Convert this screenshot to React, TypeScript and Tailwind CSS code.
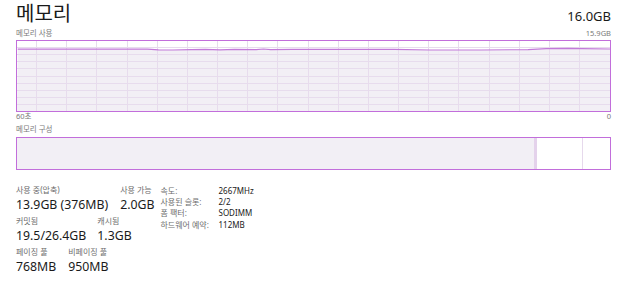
import React from "react";

const font = { fontFamily: '"Segoe UI", "Noto Sans", "Noto Sans CJK KR", sans-serif' };

function UsageGraph() {
  const W = 595;
  const H = 72;
  const vx = Array.from({ length: 19 }, (_, i) => 20.5 + Math.round(i * 30.17));
  const hy = Array.from({ length: 9 }, (_, i) => Math.round((i + 1) * 7.1) + 0.5);
  const pts: [number, number][] = [
    [1, 9.2], [180, 9.2], [195, 9.8], [215, 10], [240, 9.6], [260, 9.4], [280, 9.8], [300, 9.4],
    [330, 9.6], [340, 9], [350, 9.6], [380, 9.4], [420, 9.4], [520, 9.4], [570, 10], [600, 10],
    [640, 10], [705, 9.6], [730, 8.6], [760, 8.4], [780, 8.6], [818, 9],
  ];
  const line = pts
    .map(([x, y]) => [1 + (x / 818) * (W - 2), y] as [number, number])
    .map(([x, y]) => `${x.toFixed(1)},${y.toFixed(1)}`);
  const area = `M1,${H - 1} L${line.join(" L")} L${W - 1},${H - 1} Z`;
  return (
    <svg width={W} height={H} viewBox={`0 0 ${W} ${H}`} className="block">
      <rect x="0" y="0" width={W} height={H} fill="#ffffff" />
      <path d={area} fill="#f2eff5" />
      {hy.map((y) => (
        <line key={"h" + y} x1="1" x2={W - 1} y1={y} y2={y} stroke="#e7dced" strokeWidth="1" />
      ))}
      {vx.map((x) => (
        <line key={"v" + x} x1={x} x2={x} y1="1" y2={H - 1} stroke="#e7dced" strokeWidth="1" />
      ))}
      <polyline points={line.join(" ")} fill="none" stroke="#c27ad9" strokeWidth="1.2" />
      <rect x="0.5" y="0.5" width={W - 1} height={H - 1} fill="none" stroke="#c26edb" strokeWidth="1" />
    </svg>
  );
}

function CompositionBar() {
  return (
    <div className="flex h-[33px] w-full border border-[#c26edb] bg-white">
      <div className="h-full w-[517px] bg-[#f2eff5]" />
      <div className="h-full w-[3px] bg-[#e4d2eb]" />
      <div className="h-full w-[46px] border-r border-[#e6d9ec]" />
      <div className="h-full flex-1" />
    </div>
  );
}

function Stat({ label, value }: { label: string; value: string }) {
  return (
    <div className="flex flex-col">
      <div className="h-[10px] text-[8px] leading-[10px] text-[#6e6e6e] whitespace-nowrap">{label}</div>
      <div className="mt-[2px] h-[16px] text-[12.3px] leading-[16px] text-[#1a1a1a] whitespace-nowrap">{value}</div>
    </div>
  );
}

export default function App() {
  const props: [string, string][] = [
    ["속도:", "2667MHz"],
    ["사용된 슬롯:", "2/2"],
    ["폼 팩터:", "SODIMM"],
    ["하드웨어 예약:", "112MB"],
  ];
  return (
    <div style={font} className="h-[290px] w-[620px] overflow-hidden bg-white pl-[16px] pr-[9px]">
      <div className="flex h-[27px] items-end justify-between">
        <div className="text-[20px] leading-[27px] text-[#1a1a1a]">메모리</div>
        <div className="pb-[2px] text-[13px] leading-[18px] text-[#1a1a1a]">16.0GB</div>
      </div>
      <div className="flex h-[13px] items-center justify-between text-[7.5px] text-[#7a7a7a]">
        <span>메모리 사용</span>
        <span>15.9GB</span>
      </div>
      <UsageGraph />
      <div className="flex h-[10px] items-center justify-between text-[7.5px] text-[#7a7a7a]">
        <span>60초</span>
        <span>0</span>
      </div>
      <div className="flex h-[15px] items-center text-[7.5px] text-[#7a7a7a]">
        <span>메모리 구성</span>
      </div>
      <CompositionBar />
      <div className="mt-[15px] flex">
        <div className="flex flex-col gap-[3px]">
          <div className="flex gap-[12px]">
            <Stat label="사용 중(압축)" value="13.9GB (376MB)" />
            <Stat label="사용 가능" value="2.0GB" />
          </div>
          <div className="flex gap-[11px]">
            <Stat label="커밋됨" value="19.5/26.4GB" />
            <Stat label="캐시됨" value="1.3GB" />
          </div>
          <div className="flex gap-[12px]">
            <Stat label="페이징 풀" value="768MB" />
            <Stat label="비페이징 풀" value="950MB" />
          </div>
        </div>
        <div className="ml-[6px] flex flex-col">
          {props.map(([k, v]) => (
            <div key={k} className="flex h-[11.3px] items-center text-[8px]">
              <span className="w-[58px] text-[#6e6e6e] whitespace-nowrap">{k}</span>
              <span className="text-[#1a1a1a]">{v}</span>
            </div>
          ))}
        </div>
      </div>
    </div>
  );
}
